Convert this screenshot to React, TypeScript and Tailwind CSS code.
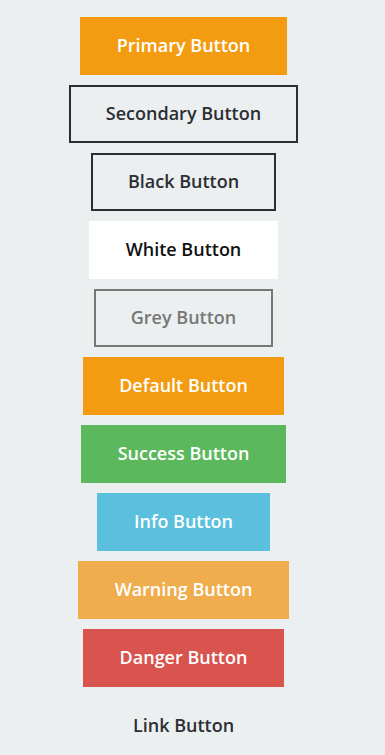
const buttons = [
  { label: "Primary Button", cls: "bg-[#f39c12] border-[#f39c12] text-white" },
  { label: "Secondary Button", cls: "bg-transparent border-[#2b2e33] text-[#2b2e33]" },
  { label: "Black Button", cls: "bg-transparent border-[#2b2e33] text-[#2b2e33]" },
  { label: "White Button", cls: "bg-white border-white text-[#111]" },
  { label: "Grey Button", cls: "bg-transparent border-[#777] text-[#777]" },
  { label: "Default Button", cls: "bg-[#f39c12] border-[#f39c12] text-white" },
  { label: "Success Button", cls: "bg-[#5cb85c] border-[#5cb85c] text-white" },
  { label: "Info Button", cls: "bg-[#5bc0de] border-[#5bc0de] text-white" },
  { label: "Warning Button", cls: "bg-[#f0ad4e] border-[#f0ad4e] text-white" },
  { label: "Danger Button", cls: "bg-[#d9534f] border-[#d9534f] text-white" },
  { label: "Link Button", cls: "bg-transparent border-transparent text-[#2b2e33]" },
];

export default function App() {
  return (
    <div className="min-h-[755px] bg-[#eceff0] font-['Open_Sans',sans-serif]">
      <div className="w-[367px] flex flex-col items-center gap-[10px] pt-[17px]">
        {buttons.map((b) => (
          <button
            key={b.label}
            className={`h-[58px] px-[34.5px] pb-[2px] border-2 flex items-center justify-center text-[18px] font-semibold ${b.cls}`}
          >
            {b.label}
          </button>
        ))}
      </div>
    </div>
  );
}
